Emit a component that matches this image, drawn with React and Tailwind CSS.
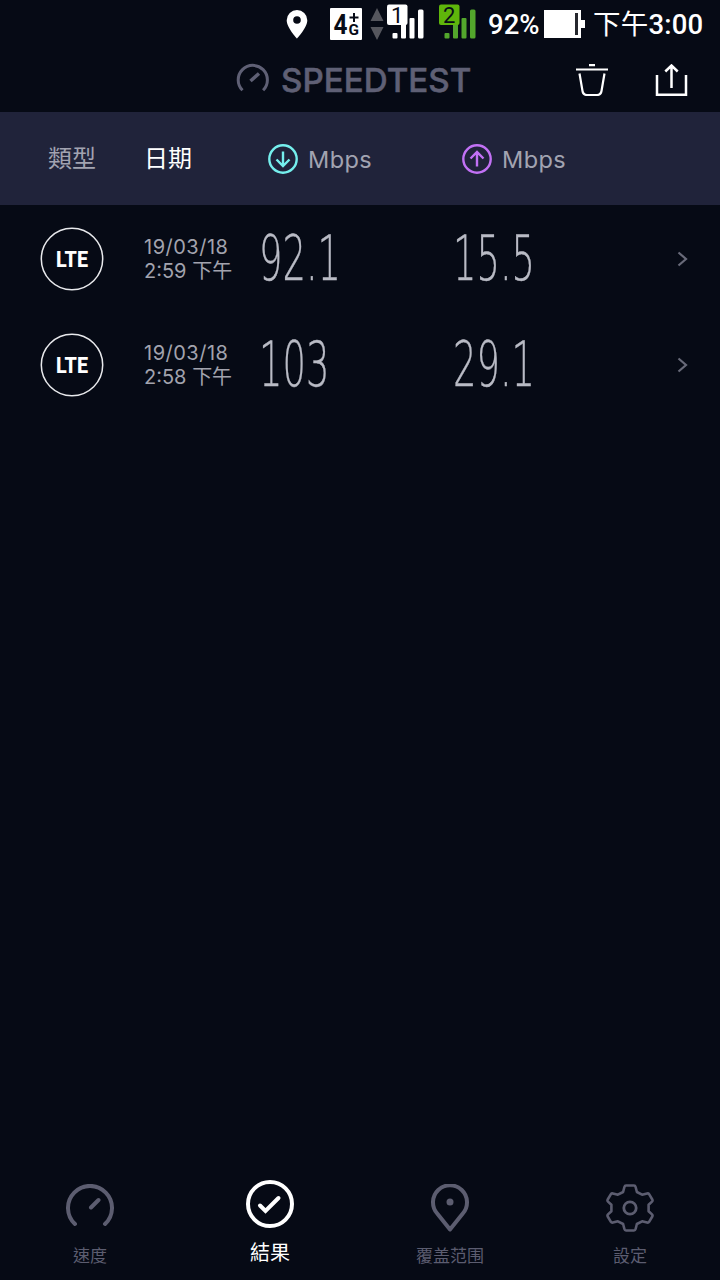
const cjk = "font-['Noto_Sans_CJK_TC',sans-serif]";
const latin = "font-['Inter','Noto_Sans_CJK_TC',sans-serif]";

function StatusBar() {
  return (
    <div className="flex h-12 items-start text-white">
      <svg className="ml-[284px] mt-2 h-8 w-[26px]" viewBox="0 0 26 32">
        <path fillRule="evenodd" fill="#fff" d="M13 2a10.3 10.3 0 0 0-10.3 10.2C2.700 19.500 13 30.500 13 30.500S23.300 19.500 23.300 12.200A10.300 10.300 0 0 0 13 2Zm0 6.200a3.800 3.800 0 1 1 0 7.600 3.800 3.800 0 0 1 0-7.600Z" />
      </svg>
      <svg className="ml-5 mt-2 h-8 w-8" viewBox="0 0 32 32" fontFamily="Roboto, sans-serif" fontWeight="700" fill="#080c17">
        <rect width="32" height="32" rx="1" fill="#fff" />
        <text x="3.500" y="26" fontSize="28" textLength="14" lengthAdjust="spacingAndGlyphs">4</text>
        <text x="18.500" y="27" fontSize="15.500" textLength="10.500" lengthAdjust="spacingAndGlyphs">G</text>
        <path d="M24 5v9M19.500 9.500h9" stroke="#080c17" strokeWidth="2" />
      </svg>
      <svg className="ml-2 mt-2 h-8 w-[14px]" viewBox="0 0 14 32" fill="#55565d">
        <path d="M7 0l6.500 13H.500ZM7 32l6.500-13H.500Z" />
      </svg>
      <svg className="ml-[3px] mt-1 h-[35px] w-[38px]" viewBox="0 0 38 35" fill="#fff">
        <rect x="5.500" y="29" width="5" height="5.500" rx="1" />
        <rect x="14" y="20" width="5" height="14.500" rx="1" />
        <rect x="22.500" y="14" width="5" height="20.500" rx="1" />
        <rect x="31" y="5.500" width="5.500" height="29" rx="1.500" />
        <rect x="0" y="0.500" width="20.500" height="20.500" rx="2" />
        <text x="4" y="18.500" fontSize="22" fontFamily="Roboto, sans-serif" fill="#080c17">1</text>
      </svg>
      <svg className="ml-[14px] mt-1 h-[35px] w-[38px]" viewBox="0 0 38 35" fill="#53a72c">
        <rect x="5.500" y="29" width="5" height="5.500" rx="1" />
        <rect x="14" y="20" width="5" height="14.500" rx="1" />
        <rect x="22.500" y="14" width="5" height="20.500" rx="1" />
        <rect x="31" y="5.500" width="5.500" height="29" rx="1.500" />
        <rect x="0" y="0.500" width="20.500" height="20.500" rx="2" fill="#5fb60b" />
        <text x="4" y="18.500" fontSize="22" fontFamily="Roboto, sans-serif" fill="#080c17">2</text>
      </svg>
      <span className="ml-[11px] mt-[9px] w-[54px] whitespace-nowrap font-[Roboto,sans-serif] text-[27.500px] leading-8 font-medium">92%</span>
      <svg className="ml-[2px] mt-[10px] h-7 w-[41px]" viewBox="0 0 41 28">
        <path fill="#fff" d="M0 0h37v10h4v8h-4v10H0Z" />
        <path fill="#26282e" d="M31 3h3v22h-3Z" />
      </svg>
      <span className="ml-[8px] mt-[9px] whitespace-nowrap font-[Roboto,'Noto_Sans_CJK_TC',sans-serif] text-[27.500px] leading-8 font-medium tracking-[0.2px]">
        <span className="font-normal">下午</span>3:00
      </span>
    </div>
  );
}

function TitleBar() {
  return (
    <div className="flex h-16 items-start">
      <svg className="ml-[236px] mt-[15px] h-8 w-[34px]" viewBox="0 0 34 32" fill="none" stroke="#5f6075">
        <path d="M6.500 27.300A14.600 14.600 0 1 1 27.100 27.300" strokeWidth="3" />
        <path d="M14.500 18L23 10.500" strokeWidth="3.500" />
      </svg>
      <h1 className={`${latin} ml-[11px] mt-4 w-[277px] text-[33px] leading-8 font-medium whitespace-nowrap text-[#5f6075] [-webkit-text-stroke:0.5px_#5f6075]`}>
        <span className="inline-block origin-left scale-x-[1.005]">SPEEDTEST</span>
      </h1>
      <button aria-label="刪除" className="ml-[17px] mt-4">
        <svg className="h-8 w-[34px]" viewBox="0 0 34 32" fill="none" stroke="#fff" strokeWidth="2.200">
          <path d="M14 1.200h6M1 5.500h32M4.500 9.500l3 17.500q.700 4 4.500 4h10q3.800 0 4.500-4l3-17.500" />
        </svg>
      </button>
      <button aria-label="分享" className="ml-[46px] mt-4">
        <svg className="h-8 w-[33px]" viewBox="0 0 33 32" fill="none" stroke="#fff" strokeWidth="2.500">
          <path d="M2 11v19.700h29V11M16.500 24V1.800M10.300 7.500l6.200-6 6.200 6" />
        </svg>
      </button>
    </div>
  );
}

function SpeedHead({ color, up }) {
  return (
    <div className="flex w-[194px] items-center">
      <svg className="h-[30px] w-[30px]" viewBox="0 0 30 30" fill="none" stroke={color} strokeWidth="2.400">
        <circle cx="15" cy="15" r="13.700" />
        <path d={up ? "M15 22.500V8.500M8.500 14.500l6.500-6.500 6.500 6.500" : "M15 7.500v14M8.500 15.500l6.500 6.500 6.500-6.500"} />
      </svg>
      <span className={`${latin} ml-[10px] mt-[2px] text-[23.500px] tracking-[0.4px] text-[#a2a3b1]`}>Mbps</span>
    </div>
  );
}

function TableHead() {
  return (
    <div className={`${cjk} flex h-[93px] items-center bg-[#20233a] text-2xl leading-8`}>
      <span className="ml-12 mb-[3px] w-[96px] text-[#a2a3b1]">類型</span>
      <span className="mb-[3px] w-[124px] text-white">日期</span>
      <SpeedHead color="#75efed" />
      <SpeedHead color="#c271f5" up />
    </div>
  );
}

function Reading({ value }) {
  return (
    <div className="w-[194px] pl-px">
      <span className="inline-block origin-left scale-x-[0.585] font-['DejaVu_Sans',sans-serif] text-[63px] leading-[64px] font-extralight whitespace-nowrap text-[#b9bbc5] [-webkit-text-stroke:0.4px_#b9bbc5]">
        {value}
      </span>
    </div>
  );
}

function ResultRow({ time, down, up }) {
  return (
    <div className="flex h-[106px] items-center">
      <svg className="ml-10 h-16 w-16" viewBox="0 0 64 64">
        <circle cx="32" cy="32" r="30.700" fill="none" stroke="#e8e9ec" strokeWidth="1.500" />
        <text x="16" y="40" fontSize="22" fontWeight="800" fontFamily="Roboto, sans-serif" fill="#fff" textLength="32" lengthAdjust="spacingAndGlyphs">LTE</text>
      </svg>
      <div className={`${latin} ml-10 w-[114px] text-[20px] leading-6 whitespace-nowrap text-[#a2a3ae]`}>
        <div className="tracking-[0.5px]">19/03/18</div>
        <div>{time} 下午</div>
      </div>
      <Reading value={down} />
      <Reading value={up} />
      <svg className="ml-[31px] h-4 w-3" viewBox="0 0 12 16" fill="none" stroke="#686a79" strokeWidth="2.200">
        <path d="M1.500 1.500l7.500 6.500-7.500 6.500" />
      </svg>
    </div>
  );
}

function NavItem({ label, active, children }) {
  return (
    <button className={`${cjk} flex w-[180px] flex-col items-center ${active ? "pt-0 text-white" : "pt-1 text-[#5c5d70]"}`}>
      <svg className="h-12 w-12" viewBox="0 0 48 48" fill="none" stroke="currentColor" strokeWidth="4" strokeLinecap="round">
        {children}
      </svg>
      <span className={active ? "mt-2 text-[20px] leading-8" : "mt-[9px] text-[17px] leading-7"}>{label}</span>
    </button>
  );
}

export default function App() {
  return (
    <div className="flex h-[1280px] w-[720px] flex-col overflow-hidden bg-[#060a15]">
      <StatusBar />
      <TitleBar />
      <TableHead />
      <main className="flex-1 pt-px">
        <ResultRow time="2:59" down="92.1" up="15.5" />
        <ResultRow time="2:58" down="103" up="29.1" />
      </main>
      <nav className="flex h-[100px] items-start">
        <NavItem label="速度">
          <path d="M9 40A22 22 0 1 1 39 40M25 23.500l7.500-7.500" />
        </NavItem>
        <NavItem label="結果" active>
          <circle cx="24" cy="24" r="22" />
          <path d="M14 25.500l5.500 5.500L32.500 18" />
        </NavItem>
        <NavItem label="覆盖范围">
          <path strokeLinejoin="round" d="M24 45.500L11.200 29.500A17 17 0 1 1 36.800 29.500Z" />
          <circle cx="24" cy="18" r="3.500" fill="currentColor" stroke="none" />
        </NavItem>
        <NavItem label="設定">
          <path strokeWidth="2.600" strokeLinejoin="round" d="M20 1.500h8q1.200 0 1.600 1.500l1.300 5 5.200 2.700 5-1.300q1.300-.3 2 .8l3.200 5.300q.6 1.200-.3 2.100l-3.400 3.200v6.400l3.400 3.200q.9.900.3 2.100l-3.200 5.300q-.7 1.100-2 .8l-5-1.300-5.200 2.700-1.300 5q-.4 1.500-1.600 1.500h-8q-1.200 0-1.600-1.500l-1.300-5-5.200-2.700-5 1.300q-1.300.3-2-.8l-3.200-5.300q-.6-1.200.3-2.100l3.400-3.200v-6.400l-3.400-3.200q-.9-.9-.3-2.100l3.200-5.300q.7-1.100 2-.8l5 1.300 5.200-2.700 1.300-5q.4-1.500 1.600-1.500Z" />
          <circle cx="24" cy="24" r="6.200" strokeWidth="2.800" />
        </NavItem>
      </nav>
    </div>
  );
}
